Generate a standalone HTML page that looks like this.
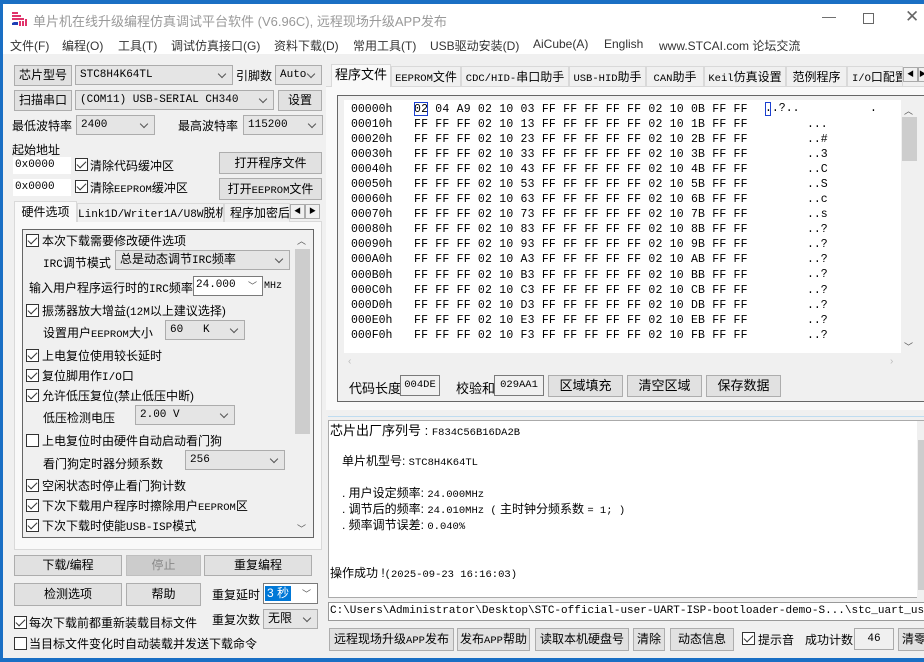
<!DOCTYPE html>
<html><head><meta charset="utf-8">
<style>
*{box-sizing:border-box;margin:0;padding:0}
html,body{overflow:hidden}
body{width:924px;height:662px;overflow:hidden;background:#1a6fc4;font-family:"Liberation Sans","Noto Sans CJK SC",sans-serif;font-size:12px;color:#000;position:relative}
.a{position:absolute;white-space:nowrap}
#win{position:absolute;left:3px;top:4px;width:921px;height:654px;background:#f0f0f0}
.btn{position:absolute;background:#e1e1e1;border:1px solid #adadad;text-align:center;font-size:12px;line-height:19px;white-space:nowrap;overflow:hidden}
.sel{position:absolute;background:#e5e5e5;border:1px solid #acacac;font-family:"Liberation Mono","Noto Sans CJK SC",monospace;font-size:11px;padding-left:4px;line-height:18px;white-space:nowrap}
.sel:after{content:"";position:absolute;right:7px;top:5px;width:5px;height:5px;border-right:1px solid #555;border-bottom:1px solid #555;transform:rotate(45deg)}
.inp{position:absolute;background:#fff;border:1px solid #fff;font-family:"Liberation Mono",monospace;font-size:11px;line-height:15px;padding-left:1px}
.cb{position:absolute;width:13px;height:13px;border:1px solid #333;background:#fff}
.cb.c:after{content:"";position:absolute;left:3px;top:0px;width:4px;height:8px;border-right:1.5px solid #333;border-bottom:1.5px solid #333;transform:rotate(45deg)}
.tab{position:absolute;border:1px solid #d9d9d9;border-bottom:none;background:#f0f0f0;text-align:center;font-size:12px;line-height:20px;white-space:nowrap}
.m{font-family:"Liberation Mono","Noto Sans CJK SC",monospace}
.hex{font-family:"Liberation Mono",monospace;font-size:11.5px;color:#000}
.arr{position:absolute;width:15px;height:15px;background:#f0f0f0;border:1px solid #aaa;font-size:7px;text-align:center;line-height:13px;overflow:hidden}
</style></head><body>
<div id="win"></div>
<div class="a" style="left:3px;top:4px;width:921px;height:30px;background:#fff"></div>
<svg class="a" style="left:11px;top:11px" width="16" height="15" viewBox="0 0 16 15"><path d="M1 2h6M1 5h9M1 8h12" stroke="#e0336b" stroke-width="2" fill="none"/><path d="M3 11h4v3H1v-2z" fill="#1d3fb5"/><path d="M9 10v5M12 10v5M15 8v7" stroke="#e0336b" stroke-width="2"/></svg>
<div class="a" style="left:33px;top:11px;font-size:13px;color:#999">单片机在线升级编程仿真调试平台软件 (V6.96C), 远程现场升级APP发布</div>
<div class="a" style="left:822px;top:8px;font-size:14px;color:#666">—</div>
<div class="a" style="left:863px;top:13px;width:11px;height:11px;border:1px solid #666"></div>
<div class="a" style="left:905px;top:7px;font-size:17px;color:#666;font-weight:300">✕</div>
<div class="a" style="left:3px;top:34px;width:921px;height:20px;background:#fff"></div>
<div class="a" style="top:37px;left:10px;color:#333">文件(F)</div>
<div class="a" style="top:37px;left:62px;color:#333">编程(O)</div>
<div class="a" style="top:37px;left:118px;color:#333">工具(T)</div>
<div class="a" style="top:37px;left:171px;color:#333">调试仿真接口(G)</div>
<div class="a" style="top:37px;left:274px;color:#333">资料下载(D)</div>
<div class="a" style="top:37px;left:353px;color:#333">常用工具(T)</div>
<div class="a" style="top:37px;left:430px;color:#333">USB驱动安装(D)</div>
<div class="a" style="top:37px;left:533px;color:#333">AiCube(A)</div>
<div class="a" style="top:37px;left:604px;color:#333">English</div>
<div class="a" style="top:37px;left:659px;color:#333">www.STCAI.com 论坛交流</div>

<div class="btn" style="left:14px;top:65px;width:58px;height:21px">芯片型号</div>
<div class="sel" style="left:75px;top:65px;width:158px;height:20px">STC8H4K64TL</div>
<div class="a" style="left:236px;top:67px">引脚数</div>
<div class="sel" style="left:275px;top:65px;width:47px;height:20px">Auto</div>
<div class="btn" style="left:14px;top:90px;width:58px;height:21px">扫描串口</div>
<div class="sel" style="left:75px;top:90px;width:199px;height:20px">(COM11) USB-SERIAL CH340</div>
<div class="btn" style="left:278px;top:90px;width:44px;height:21px">设置</div>
<div class="a" style="left:12px;top:117px">最低波特率</div>
<div class="sel" style="left:76px;top:115px;width:79px;height:20px">2400</div>
<div class="a" style="left:178px;top:117px">最高波特率</div>
<div class="sel" style="left:243px;top:115px;width:80px;height:20px">115200</div>
<div class="a" style="left:12px;top:141px">起始地址</div>
<div class="inp" style="left:13px;top:157px;width:58px;height:17px">0x0000</div>
<div class="cb c" style="left:75px;top:158px"></div>
<div class="a" style="left:90px;top:157px">清除代码缓冲区</div>
<div class="btn" style="left:219px;top:152px;width:103px;height:22px;line-height:20px">打开程序文件</div>
<div class="inp" style="left:13px;top:179px;width:58px;height:17px">0x0000</div>
<div class="cb c" style="left:75px;top:180px"></div>
<div class="a" style="left:90px;top:179px">清除<span class="m" style="font-size:10.5px">EEPROM</span>缓冲区</div>
<div class="btn" style="left:219px;top:178px;width:103px;height:22px;line-height:20px">打开<span class="m" style="font-size:10.5px">EEPROM</span>文件</div>
<div class="a" style="left:14px;top:221px;width:308px;height:329px;border:1px solid #d9d9d9;background:#f9f9f9"></div>
<div class="tab" style="left:14px;top:201px;width:63px;height:21px;background:#f9f9f9">硬件选项</div>
<div class="tab" style="left:77px;top:203px;width:147px;height:19px;line-height:18px;overflow:hidden"><span class="m" style="font-size:11px">Link1D/Writer1A/U8W</span>脱机</div>
<div class="tab" style="left:224px;top:203px;width:66px;height:19px;line-height:18px;overflow:hidden;text-align:left;padding-left:5px">程序加密后</div>
<div class="arr" style="left:290px;top:204px">◀</div><div class="arr" style="left:305px;top:204px">▶</div>
<div class="a" style="left:22px;top:229px;width:292px;height:309px;border:1px solid #666;background:#f0f0f0"></div>
<div class="a" style="left:294px;top:230px;width:17px;height:307px;background:#f0f0f0"></div>
<div class="a" style="left:295px;top:249px;width:15px;height:185px;background:#cdcdcd"></div>
<div class="a" style="left:297px;top:234px;font-size:9px;color:#555">︿</div>
<div class="a" style="left:297px;top:522px;font-size:9px;color:#555">﹀</div>
<div class="cb c" style="left:26px;top:234px"></div><div class="a" style="left:42px;top:232px">本次下载需要修改硬件选项</div>
<div class="a" style="left:43px;top:254px"><span class="m" style="font-size:11px">IRC</span>调节模式</div>
<div class="sel" style="left:115px;top:250px;width:175px;height:20px;font-size:12px">总是动态调节<span style="font-size:11px">IRC</span>频率</div>
<div class="a" style="left:29px;top:279px">输入用户程序运行时的<span class="m" style="font-size:11px">IRC</span>频率</div>
<div class="inp" style="left:193px;top:276px;width:70px;height:20px;border:1px solid #7a7a7a;line-height:17px;padding-left:2px">24.000</div>
<div class="a" style="left:248px;top:279px;font-size:9px;color:#555">﹀</div>
<div class="a m" style="left:264px;top:281px;font-size:10px">MHz</div>
<div class="cb c" style="left:26px;top:304px"></div><div class="a" style="left:42px;top:302px">振荡器放大增益(<span class="m" style="font-size:11px">12M</span>以上建议选择)</div>
<div class="a" style="left:43px;top:324px">设置用户<span class="m" style="font-size:10.5px">EEPROM</span>大小</div>
<div class="sel" style="left:165px;top:320px;width:80px;height:20px">60&nbsp;&nbsp;&nbsp;K</div>
<div class="cb c" style="left:26px;top:349px"></div><div class="a" style="left:42px;top:347px">上电复位使用较长延时</div>
<div class="cb c" style="left:26px;top:369px"></div><div class="a" style="left:42px;top:367px">复位脚用作<span class="m" style="font-size:11px">I/O</span>口</div>
<div class="cb c" style="left:26px;top:389px"></div><div class="a" style="left:42px;top:387px">允许低压复位(禁止低压中断)</div>
<div class="a" style="left:43px;top:409px">低压检测电压</div>
<div class="sel" style="left:135px;top:405px;width:100px;height:20px">2.00 V</div>
<div class="cb" style="left:26px;top:434px"></div><div class="a" style="left:42px;top:432px">上电复位时由硬件自动启动看门狗</div>
<div class="a" style="left:43px;top:455px">看门狗定时器分频系数</div>
<div class="sel" style="left:185px;top:450px;width:100px;height:20px">256</div>
<div class="cb c" style="left:26px;top:479px"></div><div class="a" style="left:42px;top:477px">空闲状态时停止看门狗计数</div>
<div class="cb c" style="left:26px;top:499px"></div><div class="a" style="left:42px;top:497px">下次下载用户程序时擦除用户<span class="m" style="font-size:10.5px">EEPROM</span>区</div>
<div class="cb c" style="left:26px;top:519px"></div><div class="a" style="left:42px;top:517px">下次下载时使能<span class="m" style="font-size:11px">USB-ISP</span>模式</div>
<div class="btn" style="left:14px;top:555px;width:108px;height:21px">下载/编程</div>
<div class="btn" style="left:126px;top:555px;width:75px;height:21px;background:#cccccc;border-color:#bfbfbf;color:#888">停止</div>
<div class="btn" style="left:204px;top:555px;width:108px;height:21px">重复编程</div>
<div class="btn" style="left:14px;top:583px;width:108px;height:23px;line-height:21px">检测选项</div>
<div class="btn" style="left:126px;top:583px;width:75px;height:23px;line-height:21px">帮助</div>
<div class="a" style="left:212px;top:586px">重复延时</div>
<div class="a" style="left:263px;top:583px;width:55px;height:21px;background:#fff;border:1px solid #7a7a7a"></div>
<div class="a" style="left:265px;top:586px;background:#0078d7;color:#fff;padding:0 2px;line-height:15px">3 秒</div>
<div class="a" style="left:302px;top:587px;font-size:9px;color:#555">﹀</div>
<div class="a" style="left:212px;top:611px">重复次数</div>
<div class="sel" style="left:263px;top:609px;width:55px;height:20px;font-size:12px">无限</div>
<div class="cb c" style="left:14px;top:616px"></div><div class="a" style="left:29px;top:614px">每次下载前都重新装载目标文件</div>
<div class="cb" style="left:14px;top:637px"></div><div class="a" style="left:29px;top:635px">当目标文件变化时自动装载并发送下载命令</div>

<div class="a" style="left:326px;top:86px;width:598px;height:324px;background:#f9f9f9;border-top:1px solid #d9d9d9"></div>
<div class="tab" style="left:331px;top:64px;width:60px;height:23px;background:#f9f9f9;font-size:13px">程序文件</div>
<div class="tab" style="left:391px;top:66px;width:70px;height:20px"><span class="m" style="font-size:10.5px">EEPROM</span>文件</div>
<div class="tab" style="left:461px;top:66px;width:108px;height:20px"><span class="m" style="font-size:10.5px">CDC/HID-</span>串口助手</div>
<div class="tab" style="left:569px;top:66px;width:77px;height:20px"><span class="m" style="font-size:10.5px">USB-HID</span>助手</div>
<div class="tab" style="left:646px;top:66px;width:58px;height:20px"><span class="m" style="font-size:10.5px">CAN</span>助手</div>
<div class="tab" style="left:704px;top:66px;width:82px;height:20px"><span class="m" style="font-size:10.5px">Keil</span>仿真设置</div>
<div class="tab" style="left:786px;top:66px;width:61px;height:20px">范例程序</div>
<div class="tab" style="left:847px;top:66px;width:56px;height:20px;overflow:hidden;text-align:left;padding-left:4px"><span class="m" style="font-size:10.5px">I/O</span>口配置</div>
<div class="arr" style="left:903px;top:67px">◀</div><div class="arr" style="left:918px;top:67px;width:6px;border-right:none">▶</div>
<div class="a" style="left:337px;top:95px;width:587px;height:307px;border:1px solid #666;border-right:none;background:#f0f0f0"></div>
<div class="a" style="left:344px;top:100px;width:557px;height:253px;background:#fff"></div>
<div class="a" style="left:901px;top:100px;width:17px;height:253px;background:#f0f0f0"></div>
<div class="a" style="left:902px;top:117px;width:15px;height:44px;background:#cdcdcd"></div>
<div class="a" style="left:904px;top:104px;font-size:9px;color:#555">︿</div>
<div class="a" style="left:904px;top:340px;font-size:9px;color:#555">﹀</div>
<div class="a" style="left:348px;top:356px;font-size:10px;color:#bbb">‹</div>
<div class="a" style="left:890px;top:356px;font-size:10px;color:#bbb">›</div>
<div class="a hex" style="left:351px;top:102px;line-height:15.05px">
00000h<br>00010h<br>00020h<br>00030h<br>00040h<br>00050h<br>00060h<br>00070h<br>00080h<br>00090h<br>000A0h<br>000B0h<br>000C0h<br>000D0h<br>000E0h<br>000F0h</div>
<div class="a hex" style="left:414px;top:102px;line-height:15.05px;letter-spacing:0.2px">
02 04 A9 02 10 03 FF FF FF FF FF 02 10 0B FF FF<br>
FF FF FF 02 10 13 FF FF FF FF FF 02 10 1B FF FF<br>
FF FF FF 02 10 23 FF FF FF FF FF 02 10 2B FF FF<br>
FF FF FF 02 10 33 FF FF FF FF FF 02 10 3B FF FF<br>
FF FF FF 02 10 43 FF FF FF FF FF 02 10 4B FF FF<br>
FF FF FF 02 10 53 FF FF FF FF FF 02 10 5B FF FF<br>
FF FF FF 02 10 63 FF FF FF FF FF 02 10 6B FF FF<br>
FF FF FF 02 10 73 FF FF FF FF FF 02 10 7B FF FF<br>
FF FF FF 02 10 83 FF FF FF FF FF 02 10 8B FF FF<br>
FF FF FF 02 10 93 FF FF FF FF FF 02 10 9B FF FF<br>
FF FF FF 02 10 A3 FF FF FF FF FF 02 10 AB FF FF<br>
FF FF FF 02 10 B3 FF FF FF FF FF 02 10 BB FF FF<br>
FF FF FF 02 10 C3 FF FF FF FF FF 02 10 CB FF FF<br>
FF FF FF 02 10 D3 FF FF FF FF FF 02 10 DB FF FF<br>
FF FF FF 02 10 E3 FF FF FF FF FF 02 10 EB FF FF<br>
FF FF FF 02 10 F3 FF FF FF FF FF 02 10 FB FF FF</div>
<div class="a" style="left:414px;top:102px;width:14px;height:14px;border:1px solid #1a3fd0"></div>
<div class="a" style="left:765px;top:102px;width:6px;height:14px;border:1px solid #1a3fd0"></div>
<div class="a hex" style="left:765px;top:102px">..?..</div>
<div class="a hex" style="left:870px;top:102px">.</div>
<div class="a hex" style="left:807px;top:117px;line-height:15.05px">...<br>..#<br>..3<br>..C<br>..S<br>..c<br>..s<br>..?<br>..?<br>..?<br>..?<br>..?<br>..?<br>..?<br>..?</div>
<div class="a" style="left:349px;top:378px;font-size:13px">代码长度</div>
<div class="a m" style="left:400px;top:375px;width:40px;height:21px;border:1px solid #7a7a7a;font-size:10.5px;line-height:19px;text-align:center">004DE</div>
<div class="a" style="left:456px;top:378px;font-size:13px">校验和</div>
<div class="a m" style="left:494px;top:375px;width:50px;height:21px;border:1px solid #7a7a7a;font-size:10.5px;line-height:19px;text-align:center">029AA1</div>
<div class="btn" style="left:548px;top:375px;width:75px;height:22px;font-size:13px;line-height:20px">区域填充</div>
<div class="btn" style="left:627px;top:375px;width:75px;height:22px;font-size:13px;line-height:20px">清空区域</div>
<div class="btn" style="left:706px;top:375px;width:75px;height:22px;font-size:13px;line-height:20px">保存数据</div>
<div class="a" style="left:328px;top:416px;width:596px;height:1px;background:#bfdcf0"></div>
<div class="a" style="left:328px;top:420px;width:596px;height:178px;background:#fff;border:1px solid #aaa;border-right:none"></div>
<div class="a" style="left:330px;top:420px;font-size:13px">芯片出厂序列号 : <span class="m" style="font-size:10.5px">F834C56B16DA2B</span></div>
<div class="a" style="left:342px;top:452px;font-size:12px">单片机型号: <span class="m" style="font-size:10.5px">STC8H4K64TL</span></div>
<div class="a" style="left:342px;top:484px;font-size:12px">. 用户设定频率: <span class="m" style="font-size:10.5px">24.000MHz</span></div>
<div class="a" style="left:342px;top:500px;font-size:12px">. 调节后的频率: <span class="m" style="font-size:10.5px">24.010MHz (</span> 主时钟分频系数 <span class="m" style="font-size:10.5px">= 1; )</span></div>
<div class="a" style="left:342px;top:516px;font-size:12px">. 频率调节误差: <span class="m" style="font-size:10.5px">0.040%</span></div>
<div class="a" style="left:330px;top:564px;font-size:12px">操作成功 !<span class="m" style="font-size:10.5px">(2025-09-23 16:16:03)</span></div>
<div class="a" style="left:917px;top:421px;width:7px;height:177px;background:#f0f0f0"></div>
<div class="a" style="left:918px;top:440px;width:6px;height:150px;background:#cdcdcd"></div>
<div class="a m" style="left:328px;top:602px;width:596px;height:19px;background:#fff;border:1px solid #999;border-right:none;font-size:11px;line-height:17px;padding-left:1px;overflow:hidden">C:\Users\Administrator\Desktop\STC-official-user-UART-ISP-bootloader-demo-S...\stc_uart_user_isp.hex</div>
<div class="btn" style="left:329px;top:628px;width:125px;height:23px;font-size:12px;line-height:21px">远程现场升级<span class="m" style="font-size:10.5px">APP</span>发布</div>
<div class="btn" style="left:457px;top:628px;width:73px;height:23px;line-height:21px">发布<span class="m" style="font-size:10.5px">APP</span>帮助</div>
<div class="btn" style="left:535px;top:628px;width:94px;height:23px;line-height:21px">读取本机硬盘号</div>
<div class="btn" style="left:633px;top:628px;width:32px;height:23px;line-height:21px">清除</div>
<div class="btn" style="left:670px;top:628px;width:64px;height:23px;line-height:21px">动态信息</div>
<div class="cb c" style="left:742px;top:632px"></div><div class="a" style="left:758px;top:631px">提示音</div>
<div class="a" style="left:805px;top:631px">成功计数</div>
<div class="a m" style="left:854px;top:628px;width:40px;height:22px;background:#f0f0f0;border:1px solid #aaa;text-align:center;line-height:20px;font-size:11px">46</div>
<div class="btn" style="left:898px;top:628px;width:26px;height:23px;line-height:21px;text-align:left;padding-left:3px;border-right:none">清零</div>
</body></html>
